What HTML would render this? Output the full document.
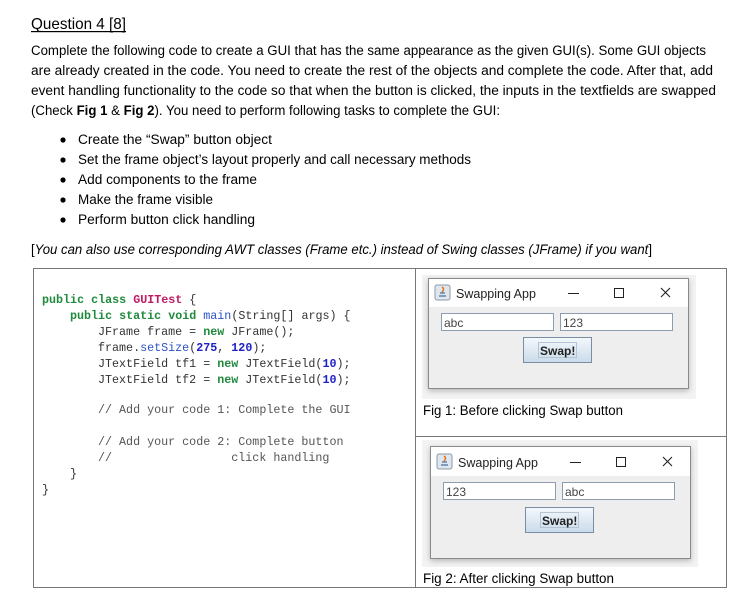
<!DOCTYPE html>
<html><head><meta charset="utf-8"><style>
html,body{margin:0;padding:0;background:#fff;width:742px;height:600px;overflow:hidden}
svg{display:block}
.t{font-family:"Liberation Sans",sans-serif;font-size:13.5px;fill:#000}
.c{font-family:"Liberation Mono",monospace;font-size:11.7px;fill:#333}
.k{fill:#1f8a3c;font-weight:bold}
.m{fill:#c01a64;font-weight:bold}
.b{fill:#2b53c5}
.n{fill:#2020c8;font-weight:bold}
.cm{fill:#555}
.w{font-family:"Liberation Sans",sans-serif;font-size:12.5px;fill:#222}
.f{font-family:"Liberation Sans",sans-serif;font-size:12px;fill:#444}
</style></head><body>
<svg width="742" height="600" viewBox="0 0 742 600" xmlns="http://www.w3.org/2000/svg">
<defs>
<linearGradient id="bg" x1="0" y1="0" x2="0" y2="1"><stop offset="0" stop-color="#f4f8fc"/><stop offset="1" stop-color="#c9dbea"/></linearGradient>
<filter id="sh" x="-10%" y="-10%" width="120%" height="130%"><feDropShadow dx="0" dy="2" stdDeviation="3" flood-color="#000" flood-opacity="0.25"/></filter>
</defs>
<text class="t" x="31" y="29" textLength="95" lengthAdjust="spacingAndGlyphs" style="font-size:16px">Question 4 [8]</text>
<rect x="31" y="31" width="95" height="1.2" fill="#000"/>
<text class="t" x="31" y="55" textLength="675" lengthAdjust="spacingAndGlyphs">Complete the following code to create a GUI that has the same appearance as the given GUI(s). Some GUI objects</text>
<text class="t" x="31" y="75" textLength="682" lengthAdjust="spacingAndGlyphs">are already created in the code. You need to create the rest of the objects and complete the code. After that, add</text>
<text class="t" x="31" y="95" textLength="685" lengthAdjust="spacingAndGlyphs">event handling functionality to the code so that when the button is clicked, the inputs in the textfields are swapped</text>
<text class="t" x="31" y="115" textLength="469" lengthAdjust="spacingAndGlyphs">(Check <tspan font-weight="bold">Fig 1</tspan> &amp; <tspan font-weight="bold">Fig 2</tspan>). You need to perform following tasks to complete the GUI:</text>
<g fill="#000">
<circle cx="63" cy="140" r="2.6"/><circle cx="63" cy="160" r="2.6"/><circle cx="63" cy="180" r="2.6"/><circle cx="63" cy="200" r="2.6"/><circle cx="63" cy="220" r="2.6"/>
</g>
<text class="t" x="78" y="144" textLength="194" lengthAdjust="spacingAndGlyphs">Create the “Swap” button object</text>
<text class="t" x="78" y="164" textLength="393" lengthAdjust="spacingAndGlyphs">Set the frame object’s layout properly and call necessary methods</text>
<text class="t" x="78" y="184" textLength="179" lengthAdjust="spacingAndGlyphs">Add components to the frame</text>
<text class="t" x="78" y="204" textLength="135" lengthAdjust="spacingAndGlyphs">Make the frame visible</text>
<text class="t" x="78" y="224" textLength="177" lengthAdjust="spacingAndGlyphs">Perform button click handling</text>
<text class="t" x="31" y="254" textLength="621" lengthAdjust="spacingAndGlyphs">[<tspan font-style="italic">You can also use corresponding AWT classes (Frame etc.) instead of Swing classes (JFrame) if you want</tspan>]</text>

<rect x="33.5" y="268.5" width="693" height="319" fill="none" stroke="#777" stroke-width="1"/>
<line x1="415.5" y1="268" x2="415.5" y2="588" stroke="#777"/>
<line x1="415" y1="436.5" x2="727" y2="436.5" stroke="#777"/>

<text class="c" x="42" y="303"><tspan class="k">public class </tspan><tspan class="m">GUITest</tspan> {</text>
<text class="c" x="70" y="319"><tspan class="k">public static void </tspan><tspan class="b">main</tspan>(String[] args) {</text>
<text class="c" x="98" y="335">JFrame frame = <tspan class="k">new</tspan> JFrame();</text>
<text class="c" x="98" y="351">frame.<tspan class="b">setSize</tspan>(<tspan class="n">275</tspan>, <tspan class="n">120</tspan>);</text>
<text class="c" x="98" y="367">JTextField tf1 = <tspan class="k">new</tspan> JTextField(<tspan class="n">10</tspan>);</text>
<text class="c" x="98" y="383">JTextField tf2 = <tspan class="k">new</tspan> JTextField(<tspan class="n">10</tspan>);</text>
<text class="c cm" x="98" y="413">// Add your code 1: Complete the GUI</text>
<text class="c cm" x="98" y="445">// Add your code 2: Complete button</text>
<text class="c cm" x="98" y="461" xml:space="preserve">//                 click handling</text>
<text class="c" x="70" y="477">}</text>
<text class="c" x="42" y="493">}</text>

<rect x="422" y="275" width="274" height="124" fill="#e8e8e8" opacity="0.5"/>
<g filter="url(#sh)">
<rect x="428.5" y="278.5" width="260" height="110" fill="#eeeeee" stroke="#8a8a8a"/>
</g>
<rect x="429" y="279" width="259" height="28" fill="#fff"/>
<rect x="435" y="285" width="15" height="15" rx="2" fill="#dfe6ee" stroke="#8d9aa8"/>
<path d="M439 296h7M440 293h5" stroke="#4a6fa0" stroke-width="1.2"/><path d="M442 287q3 2 0 5" stroke="#e07020" fill="none" stroke-width="1.5"/>
<text class="w" x="456" y="298">Swapping App</text>
<line x1="568" y1="293.5" x2="579" y2="293.5" stroke="#222"/>
<rect x="614.5" y="288.5" width="9" height="9" fill="none" stroke="#222"/>
<path d="M661 288l9 9M670 288l-9 9" stroke="#222" stroke-width="1.1"/>
<rect x="441.5" y="313.5" width="112" height="17" fill="#fff" stroke="#8c9db0"/>
<text class="f" x="444" y="327">abc</text>
<rect x="560.5" y="313.5" width="112" height="17" fill="#fff" stroke="#8c9db0"/>
<text class="f" x="563" y="327">123</text>
<rect x="523.5" y="337.5" width="68" height="25" fill="url(#bg)" stroke="#7a8ea3"/>
<rect x="538.5" y="342.5" width="38" height="15" fill="none" stroke="#b5c3d2"/>
<text class="w" x="540" y="355" font-weight="bold" style="font-size:12px">Swap!</text>
<text class="t" x="423" y="415" textLength="200" lengthAdjust="spacingAndGlyphs">Fig 1: Before clicking Swap button</text>

<rect x="422" y="440" width="276" height="127" fill="#e8e8e8" opacity="0.5"/>
<g filter="url(#sh)">
<rect x="430.5" y="446.5" width="260" height="112" fill="#eeeeee" stroke="#8a8a8a"/>
</g>
<rect x="431" y="447" width="259" height="29" fill="#fff"/>
<rect x="437" y="454" width="15" height="15" rx="2" fill="#dfe6ee" stroke="#8d9aa8"/>
<path d="M441 465h7M442 462h5" stroke="#4a6fa0" stroke-width="1.2"/><path d="M444 456q3 2 0 5" stroke="#e07020" fill="none" stroke-width="1.5"/>
<text class="w" x="458" y="467">Swapping App</text>
<line x1="570" y1="462.5" x2="581" y2="462.5" stroke="#222"/>
<rect x="616.5" y="457.5" width="9" height="9" fill="none" stroke="#222"/>
<path d="M663 457l9 9M672 457l-9 9" stroke="#222" stroke-width="1.1"/>
<rect x="443.5" y="482.5" width="112" height="17" fill="#fff" stroke="#8c9db0"/>
<text class="f" x="446" y="496">123</text>
<rect x="562.5" y="482.5" width="112" height="17" fill="#fff" stroke="#8c9db0"/>
<text class="f" x="565" y="496">abc</text>
<rect x="525.5" y="507.5" width="68" height="25" fill="url(#bg)" stroke="#7a8ea3"/>
<rect x="540.5" y="512.5" width="38" height="15" fill="none" stroke="#b5c3d2"/>
<text class="w" x="542" y="525" font-weight="bold" style="font-size:12px">Swap!</text>
<text class="t" x="423" y="583" textLength="191" lengthAdjust="spacingAndGlyphs">Fig 2: After clicking Swap button</text>
</svg>
</body></html>
